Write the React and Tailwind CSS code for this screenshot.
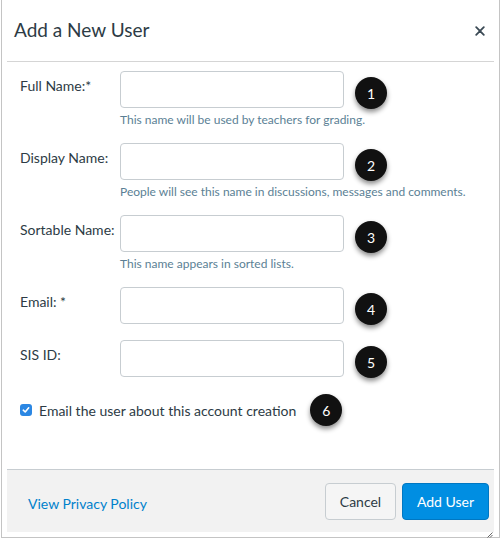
import React from "react";

const fields = [
  { label: "Full Name:*", help: "This name will be used by teachers for grading.", n: 1 },
  { label: "Display Name:", help: "People will see this name in discussions, messages and comments.", n: 2 },
  { label: "Sortable Name:", help: "This name appears in sorted lists.", n: 3 },
  { label: "Email: *", n: 4 },
  { label: "SIS ID:", n: 5 },
];

function Badge({ n, className = "" }) {
  return (
    <div
      className={
        "w-8 h-8 shrink-0 rounded-full bg-[#111] text-white text-[14px] flex items-center justify-center shadow-[0_3px_5px_rgba(0,0,0,0.45)] " +
        className
      }
    >
      {n}
    </div>
  );
}

export default function App() {
  return (
    <div
      className="w-[502px] h-[540px] bg-white overflow-hidden"
      style={{ fontFamily: "Lato, 'Open Sans', sans-serif" }}
    >
      <div className="ml-px w-[499px] h-[538px] border-x border-b border-[#c4c4c4] px-[5px] flex flex-col text-[#2d3b45]">
        <div className="h-[62px] shrink-0 border-b border-[#d5d5d5] flex items-center justify-between pl-[7px] pr-[9px]">
          <h1 className="text-[19px]">Add a New User</h1>
          <svg width="10" height="10" viewBox="0 0 10 10">
            <path d="M1.2 1.2 L8.8 8.8 M8.8 1.2 L1.2 8.8" stroke="#3b4a55" strokeWidth="1.8" strokeLinecap="round" />
          </svg>
        </div>

        <div className="h-[407px] shrink-0 pt-[9px] pl-[13px]">
          {fields.map((f) => (
            <div key={f.n} className="mb-[15px]">
              <div className="flex">
                <label className="w-[100px] pt-[5px] text-[14px] leading-[20px]">{f.label}</label>
                <div className="w-[224px] h-[37px] border border-[#c7cdd1] rounded-[4px] bg-white" />
                <Badge n={f.n} className="ml-[11px] mt-[6px]" />
              </div>
              {f.help ? (
                <p className="pl-[100px] mt-[3px] text-[12px] leading-[16px] text-[#5b7f95]">{f.help}</p>
              ) : null}
            </div>
          ))}
          <div className="flex items-center h-[34px]">
            <span className="w-3 h-3 rounded-[3px] bg-[#2b87e3] flex items-center justify-center">
              <svg width="8" height="8" viewBox="0 0 8 8">
                <path d="M1.3 4.2 L3.2 6 L6.7 1.8" stroke="#fff" strokeWidth="1.6" fill="none" strokeLinecap="round" strokeLinejoin="round" />
              </svg>
            </span>
            <span className="ml-[7px] text-[14px]">Email the user about this account creation</span>
            <Badge n={6} className="ml-[14px]" />
          </div>
        </div>

        <div className="h-[63px] shrink-0 bg-[#f2f2f2] border-t border-[#c7cdd1] flex items-center justify-between pl-[21px] pr-[5px]">
          <a className="pt-[4px] text-[14px] text-[#0081cc]">View Privacy Policy</a>
          <div className="flex gap-[6px]">
            <button className="w-[71px] h-[37px] rounded-[4px] border border-[#c7cdd1] bg-[#f5f5f5] text-[14px] text-[#2d3b45]">
              Cancel
            </button>
            <button className="w-[87px] h-[37px] rounded-[4px] border border-[#0077c2] bg-[#008ee2] text-[14px] text-white">
              Add User
            </button>
          </div>
        </div>
        <div className="flex-1 flex justify-end items-end pr-[1px] pb-[1px]">
          <svg width="6" height="6" viewBox="0 0 6 6">
            <path d="M0.5 5.5 L5.5 0.5 M3 5.5 L5.5 3" stroke="#555" strokeWidth="0.9" />
          </svg>
        </div>
      </div>
    </div>
  );
}
